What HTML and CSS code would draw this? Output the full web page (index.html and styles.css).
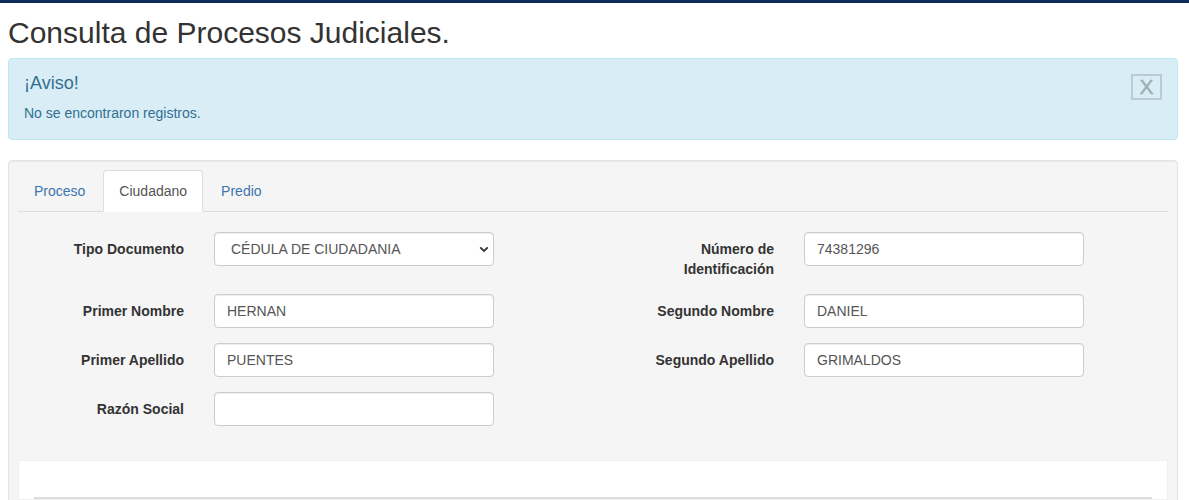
FILE: index.html
```html
<!DOCTYPE html>
<html lang="es">
<head>
<meta charset="utf-8">
<title>Consulta de Procesos Judiciales</title>
<link rel="stylesheet" href="styles.css">
</head>
<body>
<div class="topbar"></div>
<div class="container">
  <h2 class="title">Consulta de Procesos Judiciales.</h2>

  <div class="alert">
    <button class="alert-close" type="button">X</button>
    <h4 class="alert-title">¡Aviso!</h4>
    <p class="alert-text">No se encontraron registros.</p>
  </div>

  <div class="well">
    <ul class="tabs">
      <li class="tab"><a class="tab-link">Proceso</a></li>
      <li class="tab active"><a class="tab-link">Ciudadano</a></li>
      <li class="tab"><a class="tab-link">Predio</a></li>
    </ul>

    <div class="tab-content">
      <div class="form-grid">
        <div class="field">
          <label class="field-label">Tipo Documento</label>
          <div class="select-wrap">
            <select class="control select">
              <option>CÉDULA DE CIUDADANIA</option>
            </select>
            <svg class="chevron" width="10" height="7" viewBox="0 0 10 7"><path d="M1.2 1.3 L5 5 L8.8 1.3" fill="none" stroke="#333" stroke-width="1.8"/></svg>
          </div>
        </div>
        <div class="field">
          <label class="field-label">Número de Identificación</label>
          <input class="control" type="text" value="74381296">
        </div>

        <div class="field">
          <label class="field-label">Primer Nombre</label>
          <input class="control" type="text" value="HERNAN">
        </div>
        <div class="field">
          <label class="field-label">Segundo Nombre</label>
          <input class="control" type="text" value="DANIEL">
        </div>

        <div class="field">
          <label class="field-label">Primer Apellido</label>
          <input class="control" type="text" value="PUENTES">
        </div>
        <div class="field">
          <label class="field-label">Segundo Apellido</label>
          <input class="control" type="text" value="GRIMALDOS">
        </div>

        <div class="field">
          <label class="field-label">Razón Social</label>
          <input class="control" type="text" value="">
        </div>
      </div>

      <div class="results">
        <div class="results-table"></div>
      </div>
    </div>
  </div>
</div>
</body>
</html>
```

FILE: styles.css
```css
* { box-sizing: border-box; }

html, body {
  margin: 0;
  padding: 0;
  background: #ffffff;
  font-family: "Liberation Sans", Arial, Helvetica, sans-serif;
  font-size: 14px;
  line-height: 20px;
  color: #333333;
  overflow: hidden;
}

.topbar {
  height: 3px;
  background: #0c2b5b;
}

.container {
  width: 1170px;
  margin-left: 8px;
}

.title {
  margin: 13px 0 9px 0;
  font-size: 30px;
  font-weight: 400;
  line-height: 33px;
  color: #333333;
}

.alert {
  background: #d9edf7;
  border: 1px solid #bce8f1;
  border-radius: 4px;
  padding: 14px 15px 15px 15px;
  color: #31708f;
  margin-bottom: 20px;
  height: 82px;
}

.alert-close {
  float: right;
  width: 31px;
  height: 26px;
  margin-top: 1px;
  padding: 0;
  background: transparent;
  border: 2px solid #bccbd2;
  color: #9eabb2;
  font-family: "Liberation Sans", Arial, sans-serif;
  font-size: 21px;
  line-height: 20px;
  -webkit-text-stroke: 0.4px #9eabb2;
}

.alert-title {
  margin: 0 0 10px 0;
  font-size: 18px;
  font-weight: 400;
  line-height: 20px;
}

.alert-text {
  margin: 0;
  font-size: 14px;
  line-height: 20px;
}

.well {
  background: #f5f5f5;
  border: 1px solid #e3e3e3;
  border-radius: 4px;
  box-shadow: inset 0 1px 1px rgba(0, 0, 0, 0.05);
  padding: 9px 9px 0 9px;
  height: 345px;
}

.tabs {
  display: flex;
  list-style: none;
  margin: 0;
  padding: 0;
  border-bottom: 1px solid #dddddd;
}

.tab {
  margin-right: 2px;
  margin-bottom: -1px;
}

.tab-link {
  display: block;
  padding: 10px 15px;
  line-height: 20px;
  border: 1px solid transparent;
  border-radius: 4px 4px 0 0;
  color: #3d74ad;
}

.tab.active .tab-link {
  background: #ffffff;
  border-color: #dddddd #dddddd transparent #dddddd;
  color: #555555;
}

.tab-content {
  padding-top: 20px;
}

.form-grid {
  display: grid;
  grid-template-columns: 590px 559px;
  row-gap: 15px;
}

.field {
  display: grid;
  grid-template-columns: 166px 280px;
  column-gap: 30px;
  align-items: start;
}

.field-label {
  display: block;
  padding: 7px 0 0 20px;
  text-align: right;
  font-weight: 700;
  line-height: 20px;
  color: #333333;
}

.control {
  display: block;
  width: 280px;
  height: 34px;
  padding: 6px 12px;
  font-family: "Liberation Sans", Arial, sans-serif;
  font-size: 14px;
  line-height: 20px;
  color: #555555;
  background: #ffffff;
  border: 1px solid #cccccc;
  border-radius: 4px;
  box-shadow: inset 0 1px 1px rgba(0, 0, 0, 0.075);
  outline: none;
}

.select-wrap {
  position: relative;
  width: 280px;
}

.select {
  -webkit-appearance: none;
  appearance: none;
  padding-left: 16px;
}

.chevron {
  position: absolute;
  right: 5px;
  top: 14px;
}

.results {
  margin-top: 34px;
  background: #ffffff;
  border: 1px solid #f0f0f0;
  padding: 36px 15px 0 15px;
  height: 40px;
}

.results-table {
  border-top: 2px solid #dddddd;
}
```
